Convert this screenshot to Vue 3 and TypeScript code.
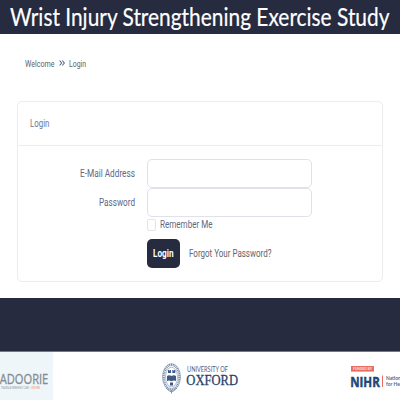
<script setup lang="ts">
import { h, type FunctionalComponent } from 'vue'

interface FitProps {
  text: string
  width: number
  size: number
}

// Single line of text condensed to a fixed width; the baseline is the bottom edge.
const FitText: FunctionalComponent<FitProps> = (props) =>
  h('svg', { width: props.width, height: props.size, style: { fontSize: `${props.size}px` } }, [
    h('text', { x: 0, y: props.size, textLength: props.width, lengthAdjust: 'spacingAndGlyphs' }, props.text),
  ])
FitText.props = ['text', 'width', 'size']
</script>

<template>
  <div class="page">
    <header class="banner">
      <FitText text="Wrist Injury Strengthening Exercise Study" :width="379.5" :size="25" />
    </header>

    <nav class="crumbs">
      <a><FitText text="Welcome" :width="29.5" :size="9.5" /></a>
      <svg class="chevrons" width="6" height="6" viewBox="0 0 6 6">
        <path d="M.6.5 2.6 3 .6 5.5M3.3.5 5.3 3 3.3 5.5" />
      </svg>
      <a><FitText text="Login" :width="17" :size="9.5" /></a>
    </nav>

    <main class="card">
      <div class="card-head"><FitText text="Login" :width="19.5" :size="10" /></div>
      <form class="card-body" @submit.prevent>
        <label class="label"><FitText text="E-Mail Address" :width="55" :size="10" /></label>
        <input class="field" type="email" />
        <label class="label"><FitText text="Password" :width="36" :size="10" /></label>
        <input class="field" type="password" />
        <label class="remember">
          <span class="check"></span>
          <FitText text="Remember Me" :width="52.5" :size="10" />
        </label>
        <div class="actions">
          <button class="submit" type="submit"><FitText text="Login" :width="20.5" :size="10" /></button>
          <a class="forgot"><FitText text="Forgot Your Password?" :width="82.5" :size="10" /></a>
        </div>
      </form>
    </main>

    <section class="band"></section>

    <footer class="logos">
      <div class="kadoorie">
        <svg width="53" height="48" viewBox="0 0 53 48">
          <text class="k-name" x="-0.3" y="32.4" textLength="48.6" lengthAdjust="spacingAndGlyphs">ADOORIE</text>
          <text class="k-sub" x="1" y="37.3" textLength="28" lengthAdjust="spacingAndGlyphs">TRAUMA &amp; EMERGENCY CARE</text>
          <text class="k-sub k-place" x="30.5" y="37.3" textLength="9.5" lengthAdjust="spacingAndGlyphs">| OXFORD</text>
        </svg>
      </div>
      <svg class="oxford" width="78" height="32" viewBox="0 0 78 32">
        <ellipse class="seal-ring" cx="9.5" cy="14" rx="7.8" ry="12.2" />
        <ellipse class="seal-line" cx="9.5" cy="14" rx="9" ry="13.4" />
        <ellipse class="seal-line" cx="9.5" cy="14" rx="6" ry="9.8" />
        <path class="seal-ink" d="M5 13q2-1.3 4.5 0 2.5-1.3 4.5 0v5q-2-1-4.5.2Q7 17 5 18zM6 7h1l.5 1 .5-1h1v3H6zM10.3 7h1l.5 1 .5-1h1v3h-3zM8 19.5h3v3H8z" />
        <path class="seal-tail" d="m4 25 3 2.6 2.5 1.4L12 27.6 15 25M9.5 27v3.5" />
        <text class="ox-top" x="25" y="9.4" textLength="41" lengthAdjust="spacingAndGlyphs">UNIVERSITY OF</text>
        <text class="ox-name" x="24.3" y="21.8" textLength="51.7" lengthAdjust="spacingAndGlyphs">OXFORD</text>
      </svg>
      <svg class="nihr" width="50" height="36" viewBox="0 0 50 36">
        <rect class="tag" x="1" y="2" width="23" height="5.6" />
        <text class="tag-text" x="3" y="6.4" textLength="19" lengthAdjust="spacingAndGlyphs">FUNDED BY</text>
        <text class="nihr-name" x="0.2" y="22.6" textLength="29.6" lengthAdjust="spacingAndGlyphs">NIHR</text>
        <rect class="tag" x="32" y="11.5" width="1" height="11.5" />
        <text class="nihr-side" x="36" y="16" textLength="38" lengthAdjust="spacingAndGlyphs">National Institute</text>
        <text class="nihr-side" x="36" y="22.3" textLength="64" lengthAdjust="spacingAndGlyphs">for Health and Care Research</text>
      </svg>
    </footer>
  </div>
</template>

<style>
body {
  background: #fff;
}
</style>

<style scoped>
.page {
  width: 400px;
  height: 400px;
  overflow: hidden;
  display: flex;
  flex-direction: column;
  box-sizing: border-box;
  background: #fff;
  font-family: Roboto, sans-serif;
  color: #5f6784;
}
.page :deep(svg) {
  display: block;
  overflow: visible;
  flex: none;
}
.page :deep(text) {
  fill: currentColor;
}
.banner {
  height: 34px;
  flex: none;
  box-sizing: border-box;
  padding: 0.5px 0 0 10px;
  background: #262b40;
  color: #fff;
  font-family: Lato, sans-serif;
}
.banner :deep(text) {
  stroke: #fff;
  stroke-width: 0.2px;
}
.crumbs {
  display: flex;
  align-items: flex-end;
  height: 32px;
  flex: none;
  padding-left: 25px;
  gap: 4.2px;
  color: #5d5f68;
}
.chevrons {
  margin-bottom: 0.5px;
}
.chevrons path {
  fill: none;
  stroke: #5d7397;
  stroke-width: 1.2;
}
.card {
  width: 366px;
  height: 181px;
  flex: none;
  box-sizing: border-box;
  margin: 35px 0 0 17px;
  border: 1px solid #ebecef;
  border-radius: 5px;
}
.card-head {
  height: 44px;
  box-sizing: border-box;
  padding: 15px 0 0 11.5px;
  border-bottom: 1px solid #ebecef;
  color: #70778f;
}
.card-body {
  display: grid;
  grid-template-columns: 117px 165px;
  grid-template-rows: 29px 29px 22px 30px;
  column-gap: 12px;
  padding-top: 13px;
}
.label {
  justify-self: end;
  padding-top: 8px;
}
.field {
  width: 165px;
  height: 29px;
  box-sizing: border-box;
  margin: 0;
  border: 1px solid #dfe2ea;
  border-radius: 5px;
  background: #fff;
}
.remember {
  grid-column: 2;
  display: flex;
  gap: 4px;
  padding-top: 1px;
}
.check {
  width: 9px;
  height: 12px;
  margin-top: 1px;
  box-sizing: border-box;
  border: 1px solid #e1e4ec;
  border-radius: 2px;
}
.actions {
  grid-column: 2;
  display: flex;
  gap: 9px;
}
.submit {
  display: flex;
  width: 33px;
  height: 29px;
  margin: 0;
  padding: 8px 0 0 6.3px;
  box-sizing: border-box;
  border: 0;
  border-radius: 5px;
  background: #262b40;
  color: #fff;
  font-family: inherit;
  font-weight: 700;
}
.forgot {
  padding-top: 8px;
  color: #62646c;
}
.band {
  height: 54px;
  flex: none;
  margin-top: 16px;
  box-sizing: border-box;
  background: #262b40;
  border-bottom: 1px solid #77758c;
}
.logos {
  display: flex;
  height: 48px;
  flex: none;
}
.kadoorie {
  width: 53px;
  flex: none;
  background: #eef6fa;
}
.k-name {
  font-family: 'Open Sans', sans-serif;
  font-size: 14px;
  color: #858b90;
  stroke: #858b90;
  stroke-width: 0.3;
}
.k-sub {
  font-size: 2.6px;
  color: #8d9396;
}
.k-place {
  color: #ed8b55;
}
.oxford {
  margin: 11px 0 0 109px;
}
.seal-ring {
  fill: #fff;
  stroke: #8294b0;
  stroke-width: 2.4;
  stroke-dasharray: 1.1 0.7;
}
.seal-line {
  fill: none;
  stroke: #7f91ad;
  stroke-width: 0.6;
}
.seal-ink {
  fill: #405985;
}
.seal-tail {
  fill: none;
  stroke: #8496b0;
  stroke-width: 1;
}
.ox-top {
  font-size: 6.6px;
  font-family: Lato, sans-serif;
  color: #4a5c7c;
}
.ox-name {
  font-family: 'Liberation Serif', serif;
  font-size: 15px;
  color: #294168;
  stroke: #294168;
  stroke-width: 0.3;
}
.nihr {
  margin: 12px 0 0 110px;
}
.tag {
  fill: #e96d62;
}
.tag-text {
  font-size: 4.4px;
  font-weight: 700;
  color: #fbd9d5;
}
.nihr-name {
  font-family: 'Open Sans', sans-serif;
  font-size: 14.8px;
  font-weight: 700;
  color: #214779;
  stroke: #214779;
  stroke-width: 0.5;
}
.nihr-side {
  font-family: Lato, sans-serif;
  font-size: 5px;
  font-weight: 700;
  color: #506b94;
}
</style>
